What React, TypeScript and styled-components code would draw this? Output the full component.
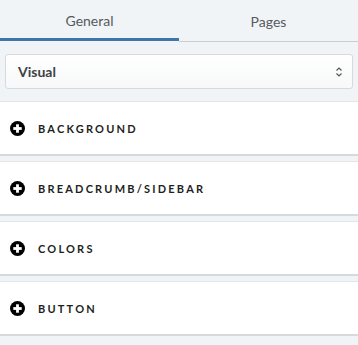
import styled, { createGlobalStyle } from "styled-components";

const GlobalStyle = createGlobalStyle`
  html, body {
    margin: 0;
    padding: 0;
    background-color: #f1f4f7;
    font-family: "Lato", "Liberation Sans", sans-serif;
  }
`;

const Wrapper = styled.div`
  width: 358px;
  height: 345px;
  display: flex;
  flex-direction: column;
  background-color: #f1f4f7;
  overflow: hidden;
`;

const Tabs = styled.div`
  display: flex;
  height: 42px;
  align-items: flex-start;
`;

const Tab = styled.div<{ $active?: boolean }>`
  flex: 1;
  display: flex;
  align-items: center;
  justify-content: center;
  padding-top: 2px;
  font-size: 14px;
  color: #555a60;
  box-sizing: border-box;
  border-bottom: ${(p) => (p.$active ? "3px solid #3f76a6" : "1px solid #c9ced3")};
  height: ${(p) => (p.$active ? "41px" : "42px")};
`;

const SelectRow = styled.div`
  padding: 12px 5px 12px 5px;
`;

const Select = styled.div`
  height: 35px;
  box-sizing: border-box;
  border: 1px solid #d6dadd;
  border-radius: 3px;
  background: linear-gradient(#ffffff, #f7f8f9);
  display: flex;
  align-items: center;
  justify-content: space-between;
  padding: 0 9px 0 12px;
  font-size: 14px;
  font-weight: bold;
  color: #3e4247;
`;

const Chevron = styled.svg`
  width: 8px;
  height: 12px;
`;

const Panels = styled.div`
  display: flex;
  flex-direction: column;
  gap: 5px;
`;

const Panel = styled.div`
  height: 55px;
  box-sizing: border-box;
  background-color: #ffffff;
  border-top: 1px solid #e3e6e9;
  border-bottom: 2px solid #d7dadd;
  display: flex;
  align-items: center;
  padding: 0 0 0 10px;
  gap: 13px;
`;

const Label = styled.span`
  font-size: 11px;
  font-weight: bold;
  letter-spacing: 2.2px;
  color: #1d1f22;
`;

function PlusIcon() {
  return (
    <svg width="15" height="15" viewBox="0 0 16 16">
      <circle cx="8" cy="8" r="8" fill="#000" />
      <rect x="3.5" y="6.5" width="9" height="3" fill="#fff" />
      <rect x="6.5" y="3.5" width="3" height="9" fill="#fff" />
    </svg>
  );
}

const sections = ["BACKGROUND", "BREADCRUMB/SIDEBAR", "COLORS", "BUTTON"];

function App() {
  return (
    <Wrapper>
      <GlobalStyle />
      <Tabs>
        <Tab $active>General</Tab>
        <Tab>Pages</Tab>
      </Tabs>
      <SelectRow>
        <Select>
          <span>Visual</span>
          <Chevron viewBox="0 0 8 12">
            <path d="M1.5 4.5 L4 2 L6.5 4.5" stroke="#555" strokeWidth="1.2" fill="none" />
            <path d="M1.5 7.5 L4 10 L6.5 7.5" stroke="#555" strokeWidth="1.2" fill="none" />
          </Chevron>
        </Select>
      </SelectRow>
      <Panels>
        {sections.map((s) => (
          <Panel key={s}>
            <PlusIcon />
            <Label>{s}</Label>
          </Panel>
        ))}
      </Panels>
    </Wrapper>
  );
}

export default App;
